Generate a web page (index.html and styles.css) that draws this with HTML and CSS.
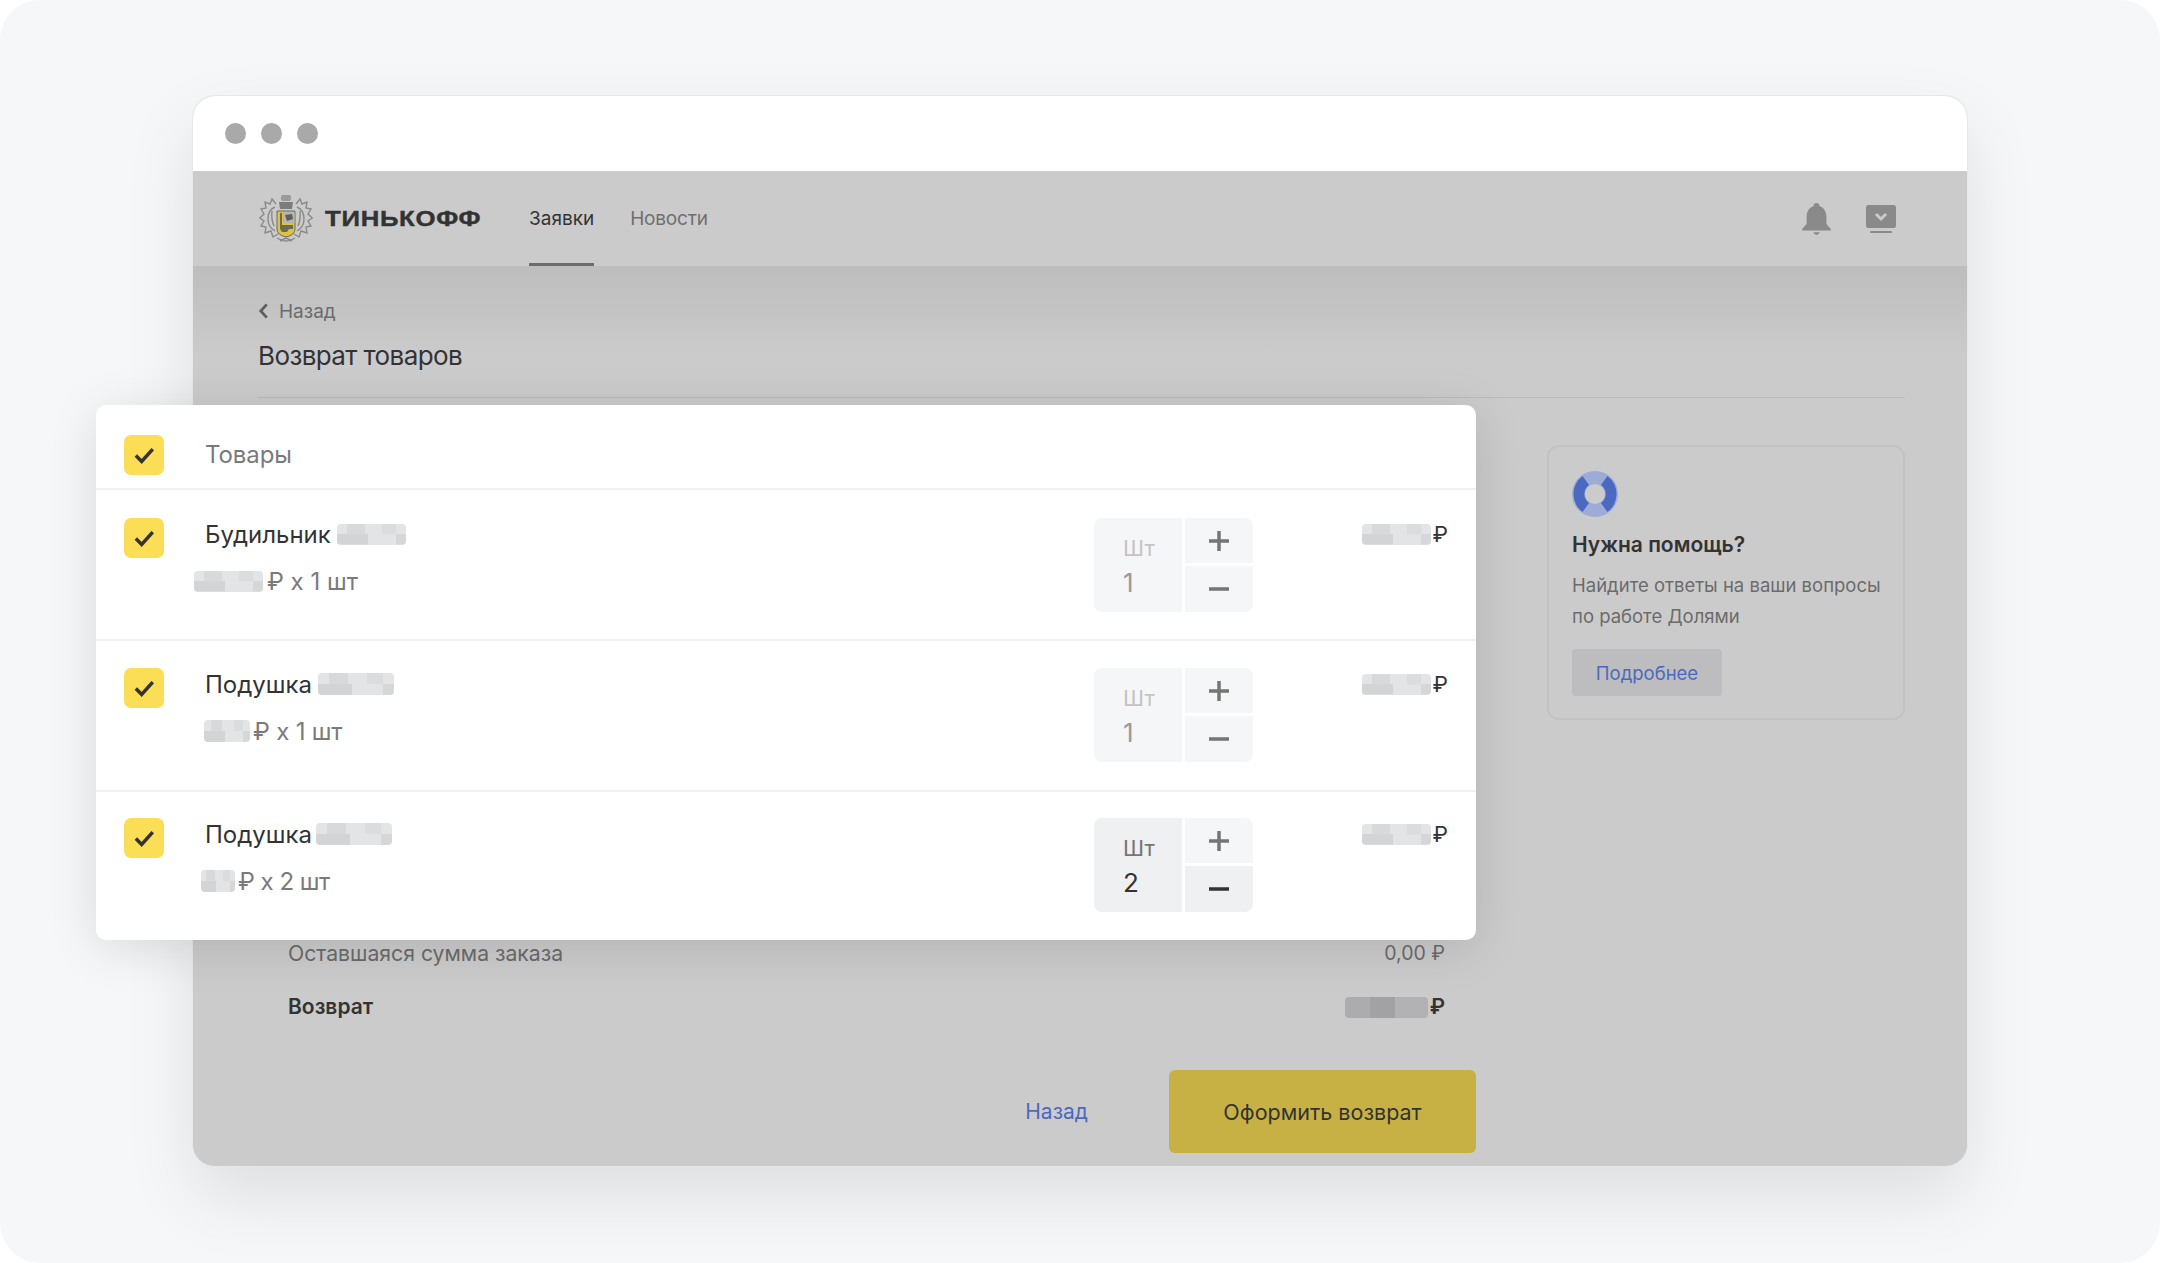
FILE: index.html
```html
<!DOCTYPE html>
<html lang="ru">
<head>
    <title>Возврат товаров</title>
    <meta charset="UTF-8">
    <link rel="stylesheet" href="styles.css">
</head>
<body>
    <div class="stage">
        <div class="window">
            <div class="titlebar">
                <span class="dot"></span>
                <span class="dot"></span>
                <span class="dot"></span>
            </div>

            <div class="header">
                <svg class="logo" viewBox="0 0 54 50">
                    <g fill="none" stroke="#8a8a8a" stroke-width="1.4">
                        <path d="M17 10 L13 5 L11 10 L6 8 L7 14 L2 15 L5 20 L0.700 24 L5 27 L2 32 L7 33 L6 39 L12 37 L14 43 L19 40"></path>
                        <path d="M37 10 L41 5 L43 10 L48 8 L47 14 L52 15 L49 20 L53.300 24 L49 27 L52 32 L47 33 L48 39 L42 37 L40 43 L35 40"></path>
                        <path d="M16 13 Q9 16 9 25 Q9 33 16 37 M38 13 Q45 16 45 25 Q45 33 38 37"></path>
                        <path d="M13 17 Q12 25 15 32 M41 17 Q42 25 39 32"></path>
                        <path d="M18 44 Q27 50 36 44 M21 47 L27 44 L33 47"></path>
                    </g>
                    <rect x="22" y="1" width="10" height="6" rx="2" fill="#9a9a9a"></rect>
                    <path d="M20 8 H34 L33 15 H21 Z" fill="#7c7c7c"></path>
                    <path d="M18 17 H36 V35 Q36 41 27 43 Q18 41 18 35 Z" fill="#dcc23f" stroke="#6a6a6a" stroke-width="1"></path>
                    <path d="M24 18 H35.500 V29 H24 Z" fill="#b5b5b5"></path>
                    <path d="M26 21 L33 20 L34 25 L28 27 Z" fill="#5e5e5e"></path>
                    <path d="M21 19 H23 V31 H34 V35 H30 L28 38 H23 L21 35 Z" fill="#6a6a5a"></path>
                </svg>
                <span class="brand">ТИНЬКОФФ</span>
                <nav class="nav">
                    <a class="nav-link active">Заявки</a>
                    <a class="nav-link">Новости</a>
                </nav>
                <div class="header-icons">
                    <svg class="bell" viewBox="0 0 28 30">
                        <path d="M14 1 a2.600 2.600 0 0 1 2.600 2.600 C21 5 23 9 23 14 V20 L27 24.500 V26 H1 V24.500 L5 20 V14 C5 9 7 5 11.400 3.600 A2.600 2.600 0 0 1 14 1 Z"></path>
                        <path d="M11 27.500 H17 Q16 30 14 30 Q12 30 11 27.500 Z"></path>
                    </svg>
                    <svg class="inbox" viewBox="0 0 32 30">
                        <rect x="1" y="1" width="30" height="23" rx="2.500"></rect>
                        <rect x="5" y="27" width="22" height="2" rx="1"></rect>
                        <path class="inbox-arrow" d="M11 10 L16 15 L21 10"></path>
                    </svg>
                </div>
            </div>

            <div class="content">
                <a class="back">
                    <svg viewBox="0 0 10 16"><path d="M8 2 L2.500 8 L8 14"></path></svg>
                    Назад
                </a>
                <h1 class="page-title">Возврат товаров</h1>

                <div class="columns">
                    <div class="main">
                        <div class="summary-row">
                            <span>Оставшаяся сумма заказа</span>
                            <span class="rest">0,00 ₽</span>
                        </div>
                        <div class="summary-row total">
                            <span>Возврат</span>
                            <span class="money"><i class="blur blur-dark"></i>₽</span>
                        </div>
                        <div class="actions">
                            <a class="link-back">Назад</a>
                            <a class="submit">Оформить возврат</a>
                        </div>
                    </div>

                    <aside class="help">
                        <svg class="buoy" viewBox="0 0 46 46">
                            <circle cx="23" cy="23" r="16.500" fill="none" stroke="#9cacd6" stroke-width="13"></circle>
                            <path d="M10.600 4.900 A22.500 22.500 0 0 0 10.600 41.100 L17 32 A11 11 0 0 1 17 14 Z" fill="#4b69c0"></path>
                            <path d="M35.400 4.900 A22.500 22.500 0 0 1 35.400 41.100 L29 32 A11 11 0 0 0 29 14 Z" fill="#4b69c0"></path>
                        </svg>
                        <h3 class="help-title">Нужна помощь?</h3>
                        <p class="help-text">Найдите ответы на ваши вопросы по работе Долями</p>
                        <a class="help-btn">Подробнее</a>
                    </aside>
                </div>
            </div>
        </div>

        <div class="card">
            <div class="card-head">
                <span class="check"><svg viewBox="0 0 24 24"><path d="M5 12.500 L10 17.500 L19.500 7"></path></svg></span>
                <span class="card-title">Товары</span>
            </div>

            <div class="item">
                <span class="check"><svg viewBox="0 0 24 24"><path d="M5 12.500 L10 17.500 L19.500 7"></path></svg></span>
                <div class="info">
                    <div class="name">Будильник <i class="blur"></i></div>
                    <div class="sub"><i class="blur"></i> ₽ х 1 шт</div>
                </div>
                <div class="qty">
                    <div class="qty-value"><span>Шт</span><b>1</b></div>
                    <div class="qty-btn"><svg viewBox="0 0 22 22"><path d="M11 1 V21 M1 11 H21"></path></svg></div>
                    <div class="qty-btn"><svg viewBox="0 0 22 22"><path d="M1 11 H21"></path></svg></div>
                </div>
                <div class="price"><i class="blur"></i>₽</div>
            </div>

            <div class="item">
                <span class="check"><svg viewBox="0 0 24 24"><path d="M5 12.500 L10 17.500 L19.500 7"></path></svg></span>
                <div class="info">
                    <div class="name">Подушка <i class="blur blur-wide"></i></div>
                    <div class="sub second"><i class="blur blur-short"></i> ₽ х 1 шт</div>
                </div>
                <div class="qty">
                    <div class="qty-value"><span>Шт</span><b>1</b></div>
                    <div class="qty-btn"><svg viewBox="0 0 22 22"><path d="M11 1 V21 M1 11 H21"></path></svg></div>
                    <div class="qty-btn"><svg viewBox="0 0 22 22"><path d="M1 11 H21"></path></svg></div>
                </div>
                <div class="price"><i class="blur"></i>₽</div>
            </div>

            <div class="item">
                <span class="check"><svg viewBox="0 0 24 24"><path d="M5 12.500 L10 17.500 L19.500 7"></path></svg></span>
                <div class="info">
                    <div class="name tight">Подушка <i class="blur blur-wide"></i></div>
                    <div class="sub third"><i class="blur blur-tiny"></i> ₽ х 2 шт</div>
                </div>
                <div class="qty active">
                    <div class="qty-value"><span>Шт</span><b>2</b></div>
                    <div class="qty-btn"><svg viewBox="0 0 22 22"><path d="M11 1 V21 M1 11 H21"></path></svg></div>
                    <div class="qty-btn pressed"><svg viewBox="0 0 22 22"><path d="M1 11 H21"></path></svg></div>
                </div>
                <div class="price"><i class="blur"></i>₽</div>
            </div>
        </div>
    </div>
</body>
</html>
```

FILE: styles.css
```css
* {
    margin: 0;
    padding: 0;
    box-sizing: border-box;
}

body {
    font-family: Inter, "Noto Sans", sans-serif;
    background-color: #fff;
    color: #333;
}

.stage {
    position: relative;
    width: 2160px;
    height: 1263px;
    padding: 96px 193px 0;
    background-color: #f6f7f8;
    border-radius: 40px;
    overflow: hidden;
}

/* Окно браузера */
.window {
    height: 1070px;
    border-radius: 22px;
    overflow: hidden;
    background-color: #cbcbcb;
    box-shadow: 0 0 0 1px #e6e7e9, 0 30px 70px rgba(0, 0, 0, 0.1);
}

.titlebar {
    height: 75px;
    background-color: #fff;
    display: flex;
    align-items: center;
    gap: 15px;
    padding: 0 32px;
}

.dot {
    width: 21px;
    height: 21px;
    border-radius: 50%;
    background-color: #a9a9a9;
}

.header {
    height: 95px;
    padding: 0 70px 0 66px;
    display: flex;
    align-items: center;
    background-color: #cbcbcb;
}

.logo {
    width: 54px;
    height: 50px;
    margin-right: 12px;
}

.brand {
    font-family: "Liberation Sans", sans-serif;
    font-weight: 700;
    font-size: 22px;
    letter-spacing: 0.6px;
    transform: scaleX(1.17);
    transform-origin: left center;
    -webkit-text-stroke: 0.4px #333;
    color: #333;
    width: 204px;
}

.nav {
    display: flex;
    gap: 36px;
    align-self: stretch;
}

.nav-link {
    display: flex;
    align-items: center;
    font-size: 19px;
    letter-spacing: -0.2px;
    color: #6f6f6f;
    border-bottom: 3px solid transparent;
    padding-top: 3px;
}

.nav-link.active {
    letter-spacing: 0;
    color: #333;
    border-bottom-color: #6b6b6b;
}

.header-icons {
    margin-left: auto;
    display: flex;
    align-items: center;
    gap: 33px;
}

.bell {
    width: 31px;
    height: 33px;
    fill: #8a8a8a;
}

.inbox {
    width: 32px;
    height: 30px;
    fill: #8a8a8a;
}

.inbox-arrow {
    fill: none;
    stroke: #cbcbcb;
    stroke-width: 3;
}

.content {
    height: 899px;
    padding: 32px 62px 0 65px;
    background: linear-gradient(#bdbdbd, #cbcbcb 90px);
}

.back {
    display: flex;
    align-items: center;
    gap: 10px;
    height: 26px;
    font-size: 19px;
    color: #6b6b6b;
}

.back svg {
    width: 11px;
    height: 18px;
    fill: none;
    stroke: #5e5e5e;
    stroke-width: 2.500;
}

.page-title {
    margin-top: 15px;
    padding-bottom: 24px;
    font-size: 26px;
    line-height: 34px;
    letter-spacing: -0.6px;
    font-weight: 400;
    color: #333;
    border-bottom: 1px solid #bababa;
}

.columns {
    display: flex;
    gap: 71px;
    margin-top: 47px;
}

.main {
    flex: 1;
    /* сверху лежит карточка с товарами */
    padding-top: 496px;
}

.summary-row {
    display: flex;
    justify-content: space-between;
    padding: 0 31px 0 30px;
    font-size: 21.200px;
    line-height: 24px;
    color: #6b6b6b;
}

.rest {
    font-size: 19.500px;
}

.summary-row.total {
    margin-top: 30px;
    font-size: 21px;
    color: #333;
    font-weight: 600;
}

.money {
    display: flex;
    align-items: center;
    gap: 2px;
}

.actions {
    display: flex;
    justify-content: flex-end;
    align-items: center;
    gap: 81px;
    margin-top: 51px;
}

.link-back {
    font-size: 21px;
    color: #4b69c0;
}

.submit {
    width: 307px;
    height: 83px;
    display: flex;
    align-items: center;
    justify-content: center;
    border-radius: 6px;
    background-color: #c8b144;
    font-size: 21.500px;
    color: #333;
}

.help {
    width: 358px;
    height: 275px;
    padding: 24px 12px 0 23px;
    border: 2px solid #c2c2c2;
    border-radius: 12px;
}

.buoy {
    display: block;
    width: 46px;
    height: 46px;
}

.help-title {
    margin-top: 14px;
    font-size: 21px;
    line-height: 28px;
    font-weight: 600;
    color: #333;
}

.help-text {
    margin-top: 11px;
    font-size: 18.500px;
    line-height: 31px;
    color: #6b6b6b;
}

.help-btn {
    display: flex;
    align-items: center;
    justify-content: center;
    width: 150px;
    height: 47px;
    margin-top: 17px;
    border-radius: 4px;
    background-color: #bdbdbf;
    font-size: 18.500px;
    color: #4b69c0;
}

/* Карточка с товарами */
.card {
    position: absolute;
    left: 96px;
    top: 405px;
    width: 1380px;
    height: 535px;
    background-color: #fff;
    border-radius: 10px;
    box-shadow: 0 8px 50px rgba(0, 0, 0, 0.12);
}

.card-head {
    height: 85px;
    padding: 16px 28px 0;
    display: flex;
    align-items: center;
    gap: 41px;
    border-bottom: 2px solid #eff0f1;
}

.card-title {
    font-size: 24px;
    letter-spacing: -0.1px;
    color: #7a7a7a;
}

.check {
    flex: none;
    width: 40px;
    height: 40px;
    display: flex;
    align-items: center;
    justify-content: center;
    border-radius: 7px;
    background-color: #fcdd56;
}

.check svg {
    width: 28px;
    height: 28px;
    fill: none;
    stroke: #333;
    stroke-width: 3;
}

.item {
    height: 151px;
    padding: 27px 28px 0;
    display: flex;
    align-items: flex-start;
    border-bottom: 2px solid #eff0f1;
}

.card-head + .item {
    padding-top: 28px;
}

.item:last-child {
    height: 149px;
    padding-top: 26px;
    border-bottom: none;
}

.info {
    flex: 1;
    margin-left: 30px;
}

.name {
    display: flex;
    align-items: center;
    gap: 6px;
    height: 32px;
    padding-left: 11px;
    font-size: 24px;
    color: #333;
}

.name.tight {
    gap: 4px;
}

.sub {
    display: flex;
    align-items: center;
    gap: 4px;
    height: 32px;
    margin-top: 15px;
    font-size: 24px;
    color: #7a7a7a;
}

.sub.second {
    padding-left: 10px;
    gap: 3px;
    letter-spacing: -0.2px;
}

.sub.third {
    padding-left: 7px;
    gap: 3px;
    letter-spacing: -0.5px;
}

/* Замазанные суммы */
.blur {
    display: inline-block;
    flex: none;
    width: 69px;
    height: 21px;
    border-radius: 4px;
    background-color: #e3e4e6;
    background-image:
        linear-gradient(90deg, transparent 15%, #d8d9db 15% 40%, transparent 40% 65%, #dbdcde 65% 85%, transparent 85%),
        linear-gradient(90deg, #d3d4d6 0 45%, transparent 45% 85%, #d6d7d9 85%);
    background-size: 100% 50%;
    background-position: top, bottom;
    background-repeat: no-repeat;
}

.blur-wide {
    width: 76px;
    height: 22px;
}

.blur-short {
    width: 46px;
    height: 22px;
}

.blur-tiny {
    width: 34px;
    height: 22px;
}

.blur-dark {
    width: 83px;
    height: 21px;
    background-color: #a9aaac;
    background-image: linear-gradient(90deg, #acacae 0 30%, #a2a2a4 30% 60%, #b2b2b4 60%);
    background-size: 100% 100%;
}

.qty {
    display: grid;
    grid-template-columns: 88px 68px;
    grid-template-rows: 45px 46px;
    gap: 3px;
    width: 159px;
    height: 94px;
    border-radius: 8px;
    overflow: hidden;
}

.qty-value {
    grid-row: span 2;
    padding: 16px 0 0 29px;
    background-color: #f5f6f7;
    color: #9a9a9a;
}

.qty-value span {
    display: block;
    font-size: 22px;
    line-height: 28px;
    color: #c4c4c4;
}

.qty-value b {
    display: block;
    margin-top: 7px;
    font-weight: 400;
    font-size: 26px;
    line-height: 28px;
}

.qty-btn {
    display: flex;
    align-items: center;
    justify-content: center;
    background-color: #f5f6f7;
}

.qty-btn svg {
    width: 22px;
    height: 22px;
    fill: none;
    stroke: #757575;
    stroke-width: 3.500;
}

.qty.active .qty-value,
.qty-btn.pressed {
    background-color: #eff0f1;
}

.qty.active .qty-value span {
    color: #757575;
}

.qty.active .qty-value b {
    color: #333;
}

.qty-btn.pressed svg {
    stroke: #333;
}

.price {
    width: 195px;
    display: flex;
    justify-content: flex-end;
    align-items: center;
    gap: 2px;
    height: 32px;
    font-size: 22px;
    color: #333;
}
```
